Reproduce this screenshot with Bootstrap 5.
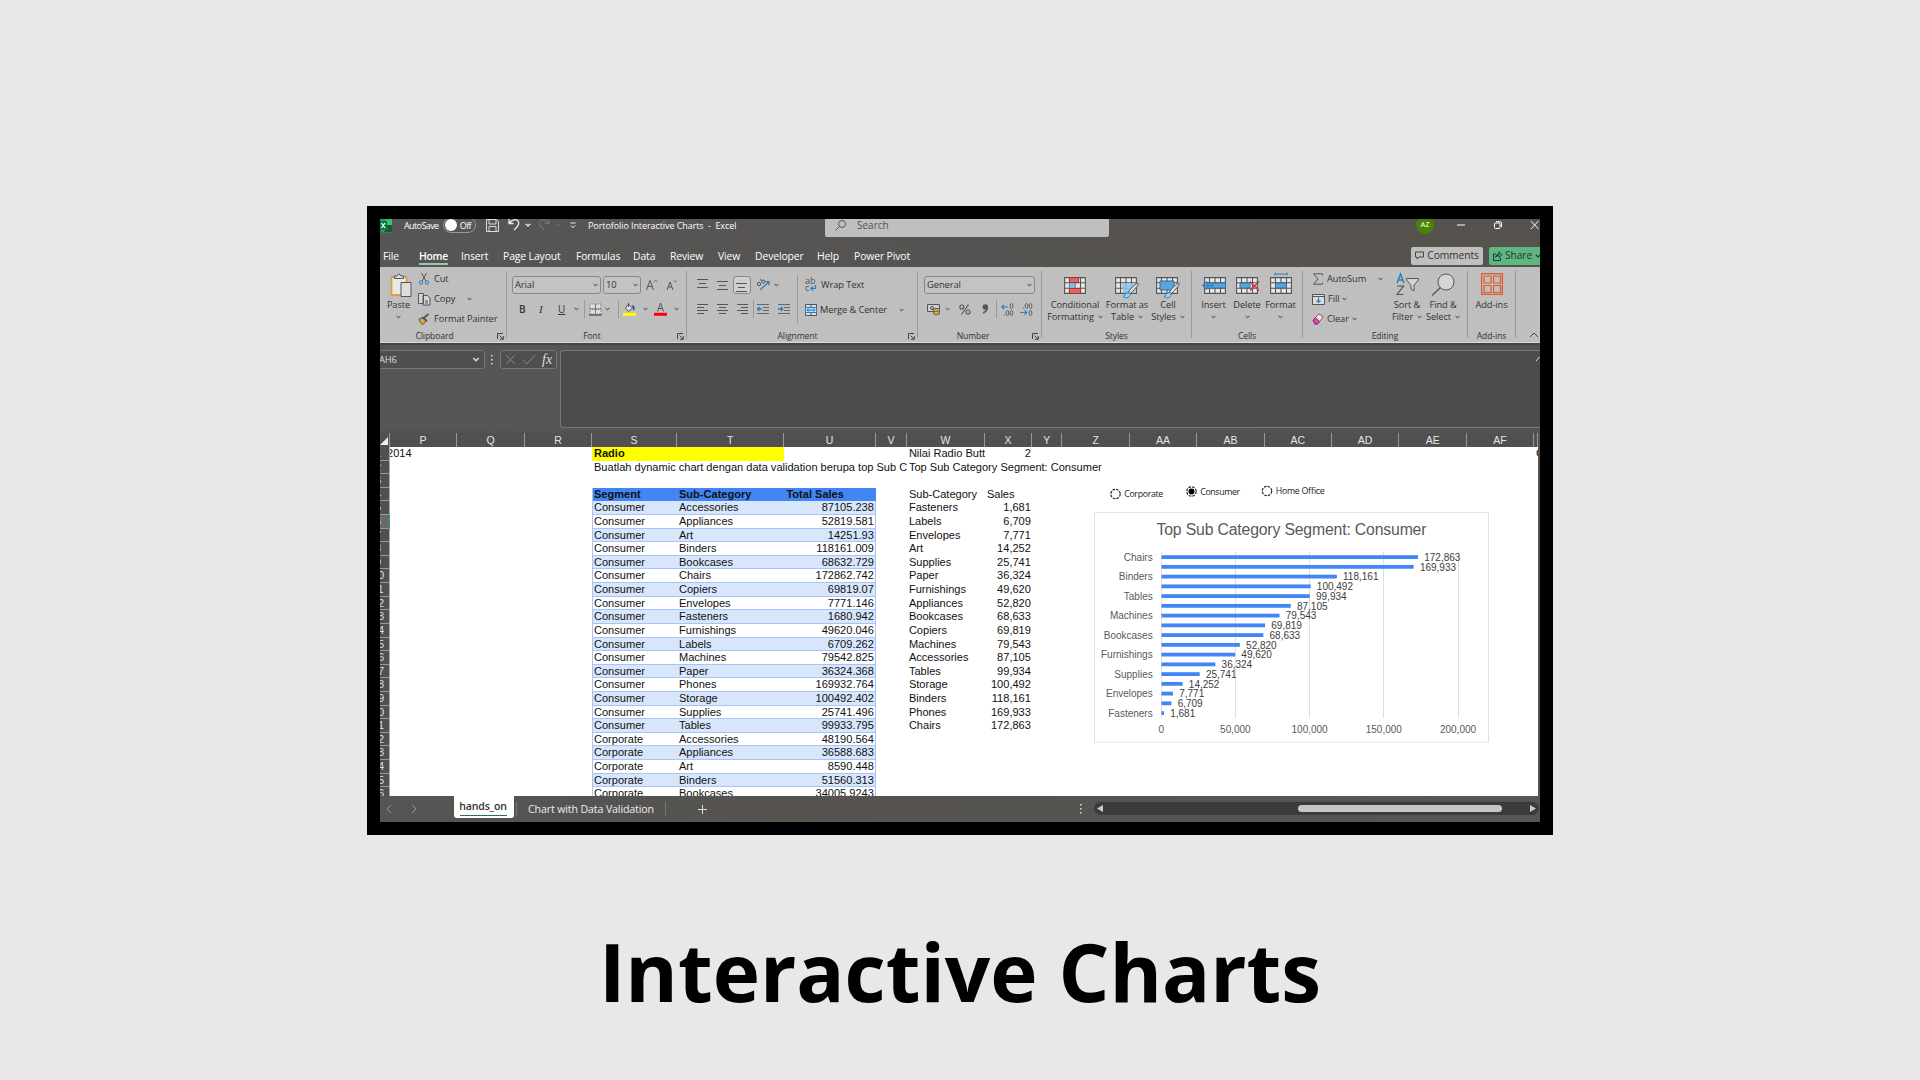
<!DOCTYPE html>
<html lang="en">
<head>
<meta charset="utf-8">
<title>Interactive Charts</title>
<link rel="stylesheet" href="https://cdn.jsdelivr.net/npm/bootstrap@5.3.0/dist/css/bootstrap.min.css">
<style>
body{width:1920px;height:1080px;overflow:hidden;background:#e9e8e6;font-family:"Open Sans","Noto Sans",sans-serif}
.frame{width:1186px;height:629px;margin:206px auto 0;border:13px solid #000;background:#000}
.screen{height:603px;overflow:hidden;position:relative;background:linear-gradient(90deg,#565656,#565452 50%,#56524d);white-space:nowrap;line-height:1;font-size:9.3px;letter-spacing:-.1px;color:#333}
svg{display:block;overflow:visible;flex:none}
.gr{display:grid;align-items:center}
.titlebar{height:26px;margin-top:-7px;color:#fff;font-size:9px;letter-spacing:-.08px;grid-template-columns:24px 39px 43px 22px 17px 13px 17px 15px 18px 237px 591px 41px 37px 36px auto}
.autosave{letter-spacing:-.6px}
.toggle{width:33px;height:16px;border:1px solid #999;border-radius:9px;padding:0 4px 0 1px}
.knob{width:12px;height:12px;border-radius:50%;background:#fff}
.searchbox{width:284px;height:24px;background:#bfbfbf;border-radius:0 0 2px 2px;color:#555;font-size:10px;padding-left:10px;gap:11px;letter-spacing:0}
.avatar{width:18px;height:18px;border-radius:50%;background:#498205;font-size:7.5px;color:#fff}
.tabs{height:29px;padding:7px 0 0 3px;color:#fff;font-size:10.4px;letter-spacing:-.12px;grid-template-columns:36px 42px 42px 73px 57px 37px 48px 37px 62px 37px 557px 78px auto}
.home{font-weight:600;width:29px;position:relative;letter-spacing:-.3px}
.home::after{content:"";position:absolute;left:0;right:0;bottom:-4px;height:2px;background:#8fd0a8}
.pill{height:18px;width:72px;background:#bfbfbf;border-radius:2px;color:#333;gap:3px;font-size:10.3px;margin-top:-1px}
.share{width:60px;background:#5cb87e;padding-left:4px}
.ribbon{height:76px;background:#bfbfbf;border-bottom:1px solid #dadada}
.rsep{width:1px;background:#999;margin:4px 0 4px}
.grp{display:flex;flex-direction:column}
.grp-label{height:13px;margin-top:auto;font-size:8.6px;display:flex;align-items:center;position:relative;top:.5px}
.grp-label span{flex:1;text-align:center}
.launch{margin-right:2px}
.l1{height:22px;margin-top:7px}.l2{height:22px;margin-top:2px}
.stack{margin-top:2px}.stack>div{height:20px}
.sel{border:1px solid #888;border-radius:3px;height:18px;padding:0 2px 0 2px;font-size:9.4px;background:#c3c3c3}
.tall{height:48px;margin-top:8px;border-right:1px solid #999}
.big{text-align:center;margin-top:6px;display:flex;flex-direction:column;align-items:center;line-height:12px}
.big .pic{height:26px;display:flex;align-items:flex-start}
.ln{display:flex;align-items:center;gap:4px}
.bar-sep{width:1px;height:18px;background:#999}
.fbar{height:87px;padding-top:5px;border-top:2px solid #454545;color:#ddd;grid-template-columns:120px 60px auto;align-items:start}
.box{border:1px solid #777;border-radius:3px;height:19px;background:#4f4f4f}
.sheet{font-family:"Liberation Sans",Arial,sans-serif;font-size:11.05px;letter-spacing:0;color:#111;background:#fff;height:349px;width:1158px;overflow:hidden;position:relative}
.cols{display:grid;grid-template-columns:10px 67px 68px 67px 85px 107.4px 91.5px 31px 78px 47px 30.5px 67.5px 67px 68px 67px 67.5px 67.5px 67px 4.5px}
.heads{height:17px;padding-top:3px;background:#545351;color:#e6e6e6;font-family:"Liberation Sans",Arial,sans-serif;font-size:10.5px;letter-spacing:0;text-align:center}
.heads div{border-right:1px solid #999;height:14px;line-height:15px;background:#505050}
.line{height:13.62px;line-height:13px}
.line>div{overflow:hidden;height:13.62px;padding:0 1px 0 2px}
.rn{background:#505050;color:#ddd;border-bottom:1px solid #999;border-right:1px solid #aaa;padding:0!important;display:flex;justify-content:center;margin-left:-13px;width:23px}
.rn.current{background:#6a6a6a;border-right-color:#2f9e60}
.yellow{background:#ff0}
.clipped{text-indent:-3px}
.tc{border-bottom:1px solid #a5c5fa}.odd{background:#d8e6fc}.hd{background:#4285f4;font-weight:bold}
.tl{border-left:1px solid #a5c5fa;padding-left:1px!important}.tr{border-right:1px solid #a5c5fa}
.over{position:absolute;left:0;top:0}
.tabbar{height:26px;background:linear-gradient(90deg,#555,#56534f 35%,#565656);color:#eee;font-size:10.6px;letter-spacing:-.12px;grid-template-columns:6px 25px 43px 62px 12px 137px 33px 382px 14px auto}
.active-tab{width:60px;height:22px;background:#fff;border-radius:0 0 3px 3px;color:#333;font-weight:600;letter-spacing:-.2px;align-self:start;display:flex;justify-content:center;align-items:center;padding:0 2px 2px 0;position:relative}
.active-tab::after{content:"";position:absolute;left:6px;right:7px;bottom:2px;height:1.5px;background:#1e7b45}
.track{width:445px;height:13px;background:#3b3b3b;border-radius:7px;padding:0 3px;display:grid;grid-template-columns:201px 204px 1fr auto;align-items:center;margin-top:-1px}
.thumb{height:7px;background:#c8c6c4;border-radius:4px}
.caption{font-size:80px;font-weight:700;color:#000;line-height:110px;margin-top:81px;text-align:center}
</style>
<script src="https://cdn.jsdelivr.net/npm/bootstrap@5.3.0/dist/js/bootstrap.bundle.min.js"></script>
</head>
<body>
<svg width="0" height="0" class="position-absolute">
<symbol id="ch" viewBox="0 0 6 4"><path d="M.8.8 3 3 5.2.8" fill="none" stroke="currentColor" stroke-width="1.2"/></symbol>
<symbol id="launch" viewBox="0 0 7 7"><path d="M.5 6V.5H6M2.5 2.5l3.5 3.5M6.3 3v3.3H3" fill="none" stroke="#444"/></symbol>
<symbol id="cells" viewBox="0 0 22 17"><path d="M.6.6h20.8v15.8H.6z" fill="#e6e6e6"/><path d="M.6.6h20.8v15.8H.6zM.6 5.8h20.8M.6 11.2h20.8M5.5.6v15.8M11 .6v15.8M16.5.6v15.8" fill="none" stroke="#555" stroke-width="1.1"/></symbol>
<symbol id="brush" viewBox="0 0 17 17"><path d="M15.5 1C12 3 8 7 6.5 10l1.800 1.800C11 9 15 5 16.500 2z" fill="#ddd" stroke="#555"/><path d="M6.500 10.500c-3-.5-3 3-5.500 4 3 2.500 7 1 7.200-2z" fill="#9ad0f5" stroke="#2a7fc0"/></symbol>
</svg>

<main class="frame">
<div class="screen">
  <div class="titlebar gr">
    <svg width="12" height="15" viewBox="0 0 12 15"><path d="M0 0h12v13.500q0 1-1 1H1z" fill="#21a366"/><path d="M6 7h6v7H4z" fill="#185c37"/><path d="M6 0h6v7H6z" fill="#33c481"/><path d="M0 3h7v9H0z" fill="#107c41"/><path d="M1.500 5l3.500 5M5 5l-3.500 5" stroke="#fff" stroke-width="1.200"/></svg>
    <span class="autosave">AutoSave</span>
    <div class="toggle d-flex align-items-center justify-content-between"><div class="knob"></div><span class="autosave">Off</span></div>
    <svg width="13" height="13" viewBox="0 0 13 13" fill="none" stroke="#ddd"><path d="M.5.5h10l2 2v10H.5zM3 .5v4.500h7V.5M3 12.500V7.500h7v5"/></svg>
    <svg width="12" height="12" viewBox="0 0 12 12" fill="none" stroke="#eee" stroke-width="1.300"><path d="M1 0v4.500h4.500M1 4.500C4 .5 8-.5 10 2s.5 5-4 9"/></svg>
    <svg width="6" height="4"><use href="#ch"/></svg>
    <svg width="12" height="12" viewBox="0 0 12 12" fill="none" stroke="#737373" stroke-width="1.200"><path d="M11 0v4.500H6.500M11 4.500C8 .5 4-.5 2 2s-.5 5 4 9"/></svg>
    <svg width="5" height="4" color="#777"><use href="#ch"/></svg>
    <svg width="6" height="7" viewBox="0 0 6 7" fill="none" stroke="#eee"><path d="M.5 1h5M.8 3.500 3 5.700 5.200 3.500"/></svg>
    <span>Portofolio Interactive Charts &nbsp;-&nbsp; Excel</span>
    <div class="searchbox d-flex align-items-center"><svg width="11" height="11" viewBox="0 0 11 11" fill="none" stroke="#555"><circle cx="7" cy="4" r="3.500"/><path d="M4.500 6.500.5 10.500"/></svg><span>Search</span></div>
    <div class="avatar d-flex align-items-center justify-content-center">AZ</div>
    <svg width="8" height="2"><path d="M0 1h8" stroke="#fff"/></svg>
    <svg width="8" height="8" viewBox="0 0 8 8" fill="none" stroke="#fff"><rect x=".5" y="2" width="5.500" height="5.500" rx="1"/><path d="M2 .7h4q1.500 0 1.500 1.500V6"/></svg>
    <svg width="9" height="8" viewBox="0 0 9 8"><path d="M.8 0l7.700 8M8.500 0 .8 8" stroke="#fff"/></svg>
  </div>

  <div class="tabs gr">
    <span>File</span><span class="home">Home</span><span>Insert</span><span>Page Layout</span><span>Formulas</span><span>Data</span><span>Review</span><span>View</span><span>Developer</span><span>Help</span><span>Power Pivot</span>
    <div class="pill d-flex align-items-center justify-content-center"><svg width="9" height="9" viewBox="0 0 9 9" fill="none" stroke="#444"><path d="M.5 1h8v5H4L2 8V6H.5z"/></svg>Comments</div>
    <div class="pill share d-flex align-items-center"><svg width="9" height="10" viewBox="0 0 9 10" fill="none" stroke="#234"><path d="M3 3H.5v6.500h7V7M2.500 6.500Q3 3 6 3V.8L8.700 4 6 6.500v-2Q4 4 2.500 6.500z"/></svg><span>Share</span><svg width="6" height="4"><use href="#ch"/></svg></div>
  </div>

  <div class="ribbon d-flex">
    <div class="grp" style="width:126px">
      <div class="d-flex">
        <div class="big" style="width:37px"><div class="pic"><svg width="22" height="25" viewBox="0 0 22 25" class="ms-1"><path d="M1.500 4h15v18h-15z" fill="#e8e8e8" stroke="#d9a040" stroke-width="1.800"/><path d="M4.500 5.500V3h2.500q2-4 4 0h2.500v2.500z" fill="#ddd" stroke="#555"/><path d="M11 9.500h10v14H11z" fill="#ddd" stroke="#555"/></svg></div><span>Paste</span><svg width="5" height="4" class="mt-1"><use href="#ch"/></svg></div>
        <div class="stack ms-auto" style="width:88px">
          <div class="ln"><svg width="12" height="12" viewBox="0 0 12 12" fill="none" stroke="#555"><path d="M3.500 0 8 8M8.500 0 4 8"/><g stroke="#2a7fc0"><circle cx="3" cy="9.500" r="1.700"/><circle cx="9" cy="9.500" r="1.700"/></g></svg>Cut</div>
          <div class="ln"><svg width="12" height="12" viewBox="0 0 12 12" fill="#d5d5d5" stroke="#555"><path d="M.5.5h5v10h-5zM5 2.500h4.500l2.500 2.500v7H5zM7 8h3M7 10h3"/></svg>Copy<svg width="5" height="4" style="margin-left:8px"><use href="#ch"/></svg></div>
          <div class="ln"><svg width="12" height="12" viewBox="0 0 12 12"><path d="M1 6l4-1 3 3-3 3.500q-3-1-4-5.500z" fill="#e2a93b" stroke="#555"/><path d="M4 4l5 4M6 5 10.500.8" stroke="#555" stroke-width="1.800"/></svg><span class="tight">Format Painter</span></div>
        </div>
      </div>
      <div class="grp-label"><span class="pe-2">Clipboard</span><svg class="launch" width="7" height="7"><use href="#launch"/></svg></div>
    </div><div class="rsep"></div>

    <div class="grp" style="width:179px">
      <div class="l1 d-flex align-items-center" style="padding-left:5px;gap:2px"><div class="sel d-flex align-items-center justify-content-between" style="width:89px">Arial<svg width="5" height="4"><use href="#ch"/></svg></div><div class="sel d-flex align-items-center justify-content-between" style="width:38px">10<svg width="5" height="4"><use href="#ch"/></svg></div>
      <svg width="12" height="12" viewBox="0 0 12 12" fill="none" stroke="#555" style="margin-left:3px"><path d="M.5 11 4 1.500 7.500 11M2 7.500h4"/><path d="M8 3 9.700 1.200 11.500 3" stroke="#2a7fc0"/></svg>
      <svg width="12" height="12" viewBox="0 0 12 12" fill="none" stroke="#555" style="margin-left:6px"><path d="M1 11 4 3l3 8M2 8h4"/><path d="M7.500 1.500 9.200 3.200 11 1.500" stroke="#2a7fc0"/></svg></div>
      <div class="l2 gr" style="padding-left:12px;grid-template-columns:20px 19px 16px 10px 5px 16px 13px 5px 16px 15px 16px auto;font-size:10px">
        <span class="fw-semibold">B</span><i style="font-family:'Liberation Serif',serif;font-size:11px">I</i><u>U</u><svg width="5" height="4"><use href="#ch"/></svg><div class="bar-sep"></div>
        <svg width="13" height="13" viewBox="0 0 13 13"><path d="M1 1h11v10H1z" fill="#ddd"/><path d="M1 1h11v10H1zM6.500 1v10M1 6h11" fill="none" stroke="#777" stroke-dasharray="1 1"/><path d="M1 6h11M6.500 1v10" stroke="#777"/><path d="M0 12h13" stroke="#333"/></svg><svg width="5" height="4"><use href="#ch"/></svg><div class="bar-sep"></div>
        <svg width="13" height="13" viewBox="0 0 13 13"><path d="M5.500 1l4 4-4 3.500-3-3.500zM5.500 0v4" fill="#ddd" stroke="#555"/><path d="M9.500 2.500q2 2 1 4.500" stroke="#1a4d8a" stroke-width="1.500" fill="none"/><path d="M0 9.800h13v3H0z" fill="#ff0"/></svg><svg width="5" height="4" class="ms-1"><use href="#ch"/></svg>
        <svg width="13" height="13" viewBox="0 0 13 13"><path d="M3.500 8.500 6.500 0l3 8.500M4.500 5.500h4" fill="none" stroke="#555"/><path d="M0 9.800h13v3H0z" fill="#f00"/></svg><svg width="5" height="4" class="ms-1"><use href="#ch"/></svg>
      </div>
      <div class="grp-label"><span>Font</span><svg class="launch" width="7" height="7"><use href="#launch"/></svg></div>
    </div><div class="rsep"></div>

    <div class="grp" style="width:230px">
      <div class="d-flex">
        <div class="tall" style="width:111px;padding-left:10px">
          <div class="gr" style="height:20px;grid-template-columns:20px 16px 24px 17px auto">
            <svg width="11" height="12" stroke="#555"><path d="M0 .5h11M2 4.500h7M0 8.500h11"/></svg><svg width="11" height="8" stroke="#555"><path d="M0 .5h11M2 4.500h7M0 8.500h11"/></svg>
            <div style="width:18px;height:18px;border:1px solid #888;border-radius:3px;background:#cfcfcf;padding:6px 2px"><svg width="12" height="9" stroke="#555"><path d="M0 .5h11M2 4.500h7M0 8.500h11"/></svg></div>
            <svg width="13" height="12" viewBox="0 0 13 12" fill="none"><path d="M3 11 11.500 3M8 2.500h4v4" stroke="#2a7fc0" stroke-width="1.200"/><circle cx="2" cy="5" r="1.700" stroke="#555"/><path d="M3 0l3.500 4.500q2.500-2 .5-3.500-1.500-.5-2 1" stroke="#555"/></svg><svg width="5" height="4"><use href="#ch"/></svg>
          </div>
          <div class="gr" style="height:22px;margin-top:3px;grid-template-columns:20px 20px 16px 4px 21px auto">
            <svg width="11" height="11" stroke="#555"><path d="M0 .5h11M0 3.500h7M0 6.500h11M0 9.500h7"/></svg><svg width="11" height="11" stroke="#555"><path d="M0 .5h11M2 3.500h7M0 6.500h11M2 9.500h7"/></svg><svg width="11" height="11" stroke="#555"><path d="M0 .5h11M4 3.500h7M0 6.500h11M4 9.500h7"/></svg><div class="bar-sep"></div>
            <svg width="12" height="11" fill="none" stroke="#666"><path d="M0 .5h12M6 3.500h6M6 6.500h6M0 9.500h12"/><path d="M5 5H.8M2.500 3 .5 5l2 2" stroke="#2a7fc0" stroke-width="1.300"/></svg>
            <svg width="12" height="11" fill="none" stroke="#666"><path d="M0 .5h12M6 3.500h6M6 6.500h6M0 9.500h12"/><path d="M0 5h4.500M2.800 3l2 2-2 2" stroke="#2a7fc0" stroke-width="1.300"/></svg>
          </div>
        </div>
        <div style="padding-left:7px">
          <div class="l1 ln" style="gap:3px"><div style="width:13px;height:14px;font-size:9px;position:relative;color:#555"><span class="d-block" style="line-height:6px">ab</span><span class="d-block" style="line-height:7px">c</span><svg width="7" height="6" class="over" style="left:5px;top:7px" fill="none" stroke="#2a7fc0" stroke-width="1.200"><path d="M5.500 0v3.500H1M3 1.500l-2 2 2 2"/></svg></div>Wrap Text</div>
          <div class="l2 ln" style="gap:3px;margin-top:3px"><svg width="12" height="12" viewBox="0 0 12 12" fill="none"><path d="M.5.500h11v11H.5zM6 .5v11" fill="#ddd" stroke="#555"/><path d="M.5 3.500h11v5H.5z" fill="#bfe0f7" stroke="#2a7fc0"/><path d="M2 6h8M3.500 4.700 2 6l1.500 1.300M8.500 4.700 10 6 8.500 7.300" stroke="#1a6bb0"/></svg>Merge &amp; Center<svg width="5" height="4" style="margin-left:9px"><use href="#ch"/></svg></div>
        </div>
      </div>
      <div class="grp-label"><span>Alignment</span><svg class="launch" width="7" height="7"><use href="#launch"/></svg></div>
    </div><div class="rsep"></div>

    <div class="grp" style="width:123px">
      <div class="l1 d-flex align-items-center" style="padding-left:6px"><div class="sel d-flex align-items-center justify-content-between" style="width:111px">General<svg width="5" height="4"><use href="#ch"/></svg></div></div>
      <div class="l2 gr" style="padding-left:9px;grid-template-columns:18px 14px 23px 14px 5px 19px auto;color:#555">
        <svg width="13" height="11" viewBox="0 0 13 11"><path d="M.5.5h12v7H.5z" fill="#ccc" stroke="#555"/><circle cx="5" cy="4" r="1.500" fill="none" stroke="#555"/><path d="M6.500 4.500h6v5.500q-3 1.500-6 0z" fill="#d9a83c" stroke="#665"/><path d="M6.500 7q3 1 6 0" stroke="#665" fill="none"/></svg><svg width="5" height="4"><use href="#ch"/></svg>
        <svg width="12" height="11" viewBox="0 0 12 11" fill="none" stroke="#555" stroke-width="1.100"><circle cx="2.800" cy="3" r="2"/><circle cx="9" cy="8" r="2"/><path d="M9.500.5l-7 10"/></svg>
        <svg width="7" height="10" viewBox="0 0 7 10"><circle cx="3.300" cy="3" r="2.700" fill="#555"/><path d="M5.500 3Q5.500 7 1 9" stroke="#555" stroke-width="1.400" fill="none"/></svg><div class="bar-sep"></div>
        <svg width="13" height="13" viewBox="0 0 13 13" fill="none" stroke="#555" stroke-width=".9"><ellipse cx="10.500" cy="3" rx="1.400" ry="2.500"/><ellipse cx="6.500" cy="10" rx="1.400" ry="2.500"/><ellipse cx="10.500" cy="10" rx="1.400" ry="2.500"/><path d="M3 12h1"/><path d="M7 4H.8M3 1.800.8 4 3 6.200" stroke="#2a7fc0" stroke-width="1.200"/></svg>
        <svg width="13" height="13" viewBox="0 0 13 13" fill="none" stroke="#555" stroke-width=".9"><ellipse cx="6.500" cy="3" rx="1.400" ry="2.500"/><ellipse cx="10.500" cy="3" rx="1.400" ry="2.500"/><ellipse cx="10.500" cy="10" rx="1.400" ry="2.500"/><path d="M3 5h1"/><path d="M0 9.500h6.500M4.500 7.300l2.200 2.200-2.200 2.200" stroke="#2a7fc0" stroke-width="1.200"/></svg>
      </div>
      <div class="grp-label"><span class="pe-1">Number</span><svg class="launch" width="7" height="7"><use href="#launch"/></svg></div>
    </div><div class="rsep"></div>

    <div class="grp" style="width:149px">
      <div class="d-flex">
        <div class="big" style="width:66px"><div class="pic pt-1"><svg width="22" height="17" viewBox="0 0 22 17"><use href="#cells"/><path d="M5.500.6h9v5h-9zM5.500 11.500h11v5h-11z" fill="#e06666" stroke="#a33"/><path d="M5.500 6h5v5h-5z" fill="#7db8e8"/></svg></div><span>Conditional</span><span class="ln">Formatting<svg width="5" height="4"><use href="#ch"/></svg></span></div>
        <div class="big" style="width:38px"><div class="pic pt-1"><svg width="24" height="22" viewBox="0 0 24 22"><use href="#cells" width="22" height="17"/><path d="M6.500 6h14v10H8z" fill="#8cc4f0" opacity=".8"/><use href="#brush" x="7" y="5" width="17" height="17"/></svg></div><span>Format as</span><span class="ln">Table<svg width="5" height="4"><use href="#ch"/></svg></span></div>
        <div class="big" style="width:44px"><div class="pic pt-1"><svg width="24" height="22" viewBox="0 0 24 22"><use href="#cells" width="22" height="17"/><path d="M4 4h14v9H4z" fill="#5aa5dc" stroke="#2a6fa8"/><use href="#brush" x="7" y="5" width="17" height="17"/></svg></div><span>Cell</span><span class="ln">Styles<svg width="5" height="4"><use href="#ch"/></svg></span></div>
      </div>
      <div class="grp-label"><span>Styles</span></div>
    </div><div class="rsep"></div>

    <div class="grp" style="width:110px">
      <div class="d-flex" style="padding-left:5px">
        <div class="big" style="width:33px"><div class="pic pt-1"><svg width="24" height="17" viewBox="0 0 24 17"><use href="#cells" x="2" width="22" height="17"/><path d="M5 6h18.500v5H5z" fill="#5aa5dc" stroke="#2a6fa8"/><path d="M12 8.500H1M5 4.500 1 8.500l4 4" fill="none" stroke="#2a7fc0" stroke-width="1.400"/></svg></div><span>Insert</span><svg width="5" height="4" class="mt-1"><use href="#ch"/></svg></div>
        <div class="big" style="width:34px"><div class="pic pt-1"><svg width="23" height="17" viewBox="0 0 23 17"><use href="#cells" width="22" height="17"/><path d="M4 6h10v5H4z" fill="#5aa5dc" stroke="#2a6fa8"/><path d="M14 4.500l9 9M23 4.500l-9 9" stroke="#d13438" stroke-width="1.400"/></svg></div><span>Delete</span><svg width="5" height="4" class="mt-1"><use href="#ch"/></svg></div>
        <div class="big" style="width:33px"><div class="pic pt-1"><svg width="22" height="17" viewBox="0 0 22 17"><use href="#cells"/><path d="M5.500 6h11v5h-11z" fill="#5aa5dc" stroke="#2a6fa8"/><path d="M5-3h12M5-4.500v3M17-4.500v3" stroke="#2a7fc0"/></svg></div><span>Format</span><svg width="5" height="4" class="mt-1"><use href="#ch"/></svg></div>
      </div>
      <div class="grp-label"><span>Cells</span></div>
    </div><div class="rsep"></div>

    <div class="grp" style="width:164px">
      <div class="d-flex">
        <div class="stack" style="width:86px;padding-left:9px">
          <div class="ln" style="gap:3px"><svg width="12" height="12" viewBox="0 0 12 12" fill="none" stroke="#555"><path d="M10.500 2.500V.8H1.500L6 6l-4.500 5.200h9V9.500"/></svg>AutoSum<svg width="5" height="4" style="margin-left:9px"><use href="#ch"/></svg></div>
          <div class="ln" style="gap:3px"><svg width="13" height="11" viewBox="0 0 13 11" fill="none"><path d="M.5.5h12v10H.5zM.5 2.500h12" fill="#ddd" stroke="#555"/><path d="M6.500 3.500v5M4.500 6.500l2 2 2-2" stroke="#2a7fc0" stroke-width="1.200"/></svg>Fill<svg width="5" height="4"><use href="#ch"/></svg></div>
          <div class="ln" style="gap:3px"><svg width="12" height="12" viewBox="0 0 12 12"><path d="M1 7 7 .8 11.300 4 5.500 11H3z" fill="#e6e6e6" stroke="#a33a7a"/><path d="M1 7l2.500-2.500 4 4L5.500 11H3z" fill="#d94fa5" stroke="#8a2a66"/></svg>Clear<svg width="5" height="4"><use href="#ch"/></svg></div>
        </div>
        <div class="big" style="width:36px"><div class="pic"><svg width="23" height="23" viewBox="0 0 23 23" fill="none"><path d="M1 10 4.500 1 8 10M2.200 7h4.600" stroke="#2a7fc0" stroke-width="1.400"/><path d="M1 13h6.500L1 21.500h6.500" stroke="#555" stroke-width="1.200"/><path d="M10.500 5.500h12v1.500L18 12v6l-3-2v-4l-4.500-5z" stroke="#555" fill="#d5d5d5"/></svg></div><span>Sort &amp;</span><span class="ln">Filter<svg width="5" height="4"><use href="#ch"/></svg></span></div>
        <div class="big" style="width:36px"><div class="pic"><svg width="24" height="23" viewBox="0 0 24 23"><circle cx="15" cy="9" r="8" fill="#d5d5d5" stroke="#555"/><path d="M9.500 14.500 1 22.500" stroke="#555" stroke-width="1.300"/></svg></div><span>Find &amp;</span><span class="ln">Select<svg width="5" height="4"><use href="#ch"/></svg></span></div>
      </div>
      <div class="grp-label"><span>Editing</span></div>
    </div><div class="rsep"></div>

    <div class="grp" style="width:47px">
      <div class="big"><div class="pic"><svg width="22" height="22" viewBox="0 0 22 22" fill="none" stroke="#e0592a" stroke-width="1.200"><path d="M.6.6h20.800v20.800H.6zM3 3h7v7H3zM12.500 3h7v7h-7zM3 12.500h7v7H3zM12.500 12.500h7v7h-7z"/></svg></div><span>Add-ins</span></div>
      <div class="grp-label"><span>Add-ins</span></div>
    </div><div class="rsep"></div>
    <svg class="mt-auto ms-auto mb-1" width="10" height="6" style="margin-right:1px" fill="none" stroke="#444"><path d="M1 5l4-4 4 4"/></svg>
  </div>

  <div class="fbar gr">
    <div class="box d-flex align-items-center justify-content-between" style="width:107px;margin-left:-2px;padding-right:4px;padding-left:0"><span>AH6</span><svg width="8" height="5" viewBox="0 0 6 4"><use href="#ch"/></svg></div>
    <div class="box d-flex align-items-center justify-content-between position-relative" style="width:57px;padding:0 4px 0 5px"><svg class="position-absolute" style="left:-10px" width="2" height="10" fill="#ddd"><path d="M0 0h1.500v1.500H0zM0 4h1.500v1.500H0zM0 8h1.500v1.500H0z"/></svg><svg width="9" height="9"><path d="M0 0l9 9M9 0 0 9" stroke="#888"/></svg><svg width="12" height="9" fill="none" stroke="#888"><path d="M0 5l4 4L12 0"/></svg><i style="font-family:'Liberation Serif',serif;font-size:14px">fx</i></div>
    <div class="box position-relative" style="height:78px;background:#4c4c4c;border-right:0;border-radius:3px 0 0 3px"><svg class="position-absolute" style="right:-3px;top:6px" width="7" height="4" fill="none" stroke="#ddd"><path d="M0 4l3.500-4L7 4"/></svg></div>
  </div>

  <div class="cols heads" id="heads"></div>
  <div class="sheet">
    <div id="rows"></div>
    <svg class="over" id="chart" width="1158" height="349" viewBox="380 447 1158 349"></svg>
  </div>
  <div class="tabbar gr">
    <span></span><svg width="5" height="8" fill="none" stroke="#999"><path d="M5 0 1 4l4 4"/></svg><svg width="5" height="8" fill="none" stroke="#999" style="margin-left:1px"><path d="M0 0l4 4-4 4"/></svg>
    <div class="active-tab">hands_on</div><div class="bar-sep" style="height:14px;background:#777"></div><span>Chart with Data Validation</span><div class="bar-sep" style="height:14px;background:#777"></div>
    <svg width="9" height="9" stroke="#ddd"><path d="M4.500 0v9M0 4.500h9"/></svg><svg width="2" height="10" fill="#ddd"><path d="M0 0h1.500v1.500H0zM0 4h1.500v1.500H0zM0 8h1.500v1.500H0z"/></svg>
    <div class="track"><svg width="6" height="7" fill="#ccc"><path d="M6 0v7L0 3.500z"/></svg><div class="thumb"></div><span></span><svg width="6" height="7" fill="#ccc"><path d="M0 0v7l6-3.500z"/></svg></div>
  </div>
</div>
</main>
<h1 class="caption mb-0">Interactive Charts</h1>

<script>
const heads = ['', 'P','Q','R','S','T','U','V','W','X','Y','Z','AA','AB','AC','AD','AE','AF',''];
document.getElementById('heads').innerHTML = heads.map((h, i) => i ? `<div>${h}</div>` :
  '<div><svg width="9" height="13"><path d="M8 4v8H0z" fill="#eee"/></svg></div>').join('');
const table = [['Consumer','Accessories','87105.238'],['Consumer','Appliances','52819.581'],['Consumer','Art','14251.93'],['Consumer','Binders','118161.009'],['Consumer','Bookcases','68632.729'],['Consumer','Chairs','172862.742'],['Consumer','Copiers','69819.07'],['Consumer','Envelopes','7771.146'],['Consumer','Fasteners','1680.942'],['Consumer','Furnishings','49620.046'],['Consumer','Labels','6709.262'],['Consumer','Machines','79542.825'],['Consumer','Paper','36324.368'],['Consumer','Phones','169932.764'],['Consumer','Storage','100492.402'],['Consumer','Supplies','25741.496'],['Consumer','Tables','99933.795'],['Corporate','Accessories','48190.564'],['Corporate','Appliances','36588.683'],['Corporate','Art','8590.448'],['Corporate','Binders','51560.313'],['Corporate','Bookcases','34005.9243']];
const ranked = [['Fasteners',1681],['Labels',6709],['Envelopes',7771],['Art',14252],['Supplies',25741],['Paper',36324],['Furnishings',49620],['Appliances',52820],['Bookcases',68633],['Copiers',69819],['Machines',79543],['Accessories',87105],['Tables',99934],['Storage',100492],['Binders',118161],['Phones',169933],['Chairs',172863]];
const fmt = n => n.toLocaleString('en-US');
const cell = (col, text, cls = '', span = 1) => `<div class="${cls}" style="grid-area:1/${col}/2/${col + span}">${text}</div>`;
let out = '';
for (let n = 1; n <= 26; n++) {
  let c = `<div class="rn${n === 6 ? ' current' : ''}" style="grid-area:1/1/2/2">${n}</div>`;
  if (n === 1) c += cell(2, '2014', 'px-0 clipped') + cell(5, '<b>Radio</b>', 'yellow', 2) + cell(9, 'Nilai Radio Butt') + cell(10, '2', 'text-end') + cell(19, 'C');
  if (n === 2) c += cell(5, 'Buatlah dynamic chart dengan data validation berupa top Sub C', '', 4) + cell(9, 'Top Sub Category Segment: Consumer', '', 5);
  if (n === 4) c += cell(5, 'Segment', 'hd tl') + cell(6, 'Sub-Category', 'hd') + cell(7, 'Total Sales', 'hd') + cell(9, 'Sub-Category') + cell(10, 'Sales');
  if (n > 4) {
    const t = table[n - 5], k = n % 2 ? ' odd' : '';
    c += cell(5, t[0], 'tc tl' + k) + cell(6, t[1], 'tc' + k) + cell(7, t[2], 'tc tr text-end' + k);
    const r = ranked[n - 5];
    if (r) c += cell(9, r[0]) + cell(10, fmt(r[1]), 'text-end');
  }
  out += `<div class="cols line">${c}</div>`;
}
document.getElementById('rows').innerHTML = out;

/* option buttons and bar chart floating over the sheet */
let g = '<g font-family="Open Sans" font-size="8.800" fill="#222">';
[[1115.5, 494, 'Corporate', 39], [1191.5, 491.5, 'Consumer', 40], [1267, 491, 'Home Office', 49]].forEach(([x, y, t, w], i) => {
  g += `<circle cx="${x}" cy="${y}" r="4.700" fill="#fff" stroke="#222" stroke-width="1.200" stroke-dasharray="2.600 1.100"/>`;
  if (i === 1) g += `<circle cx="${x}" cy="${y}" r="3" fill="#000"/>`;
  g += `<text x="${x + 8.7}" y="${y + 3.3}" textLength="${w}">${t}</text>`;
});
g += '</g><g font-family="Liberation Sans" font-size="10" fill="#595959"><rect x="1094.500" y="512.500" width="394" height="229.500" fill="#fff" stroke="#e2e2e2"/>';
g += '<text x="1156.500" y="535" font-size="15.800" textLength="270">Top Sub Category Segment: Consumer</text>';
for (let i = 0; i < 5; i++) {
  const x = 1161.2 + i * 74.2;
  g += `<path d="M${Math.floor(x) + .5} 552v166" stroke="#e0e0e0"/><text x="${x}" y="732.500" text-anchor="middle">${fmt(i * 50000)}</text>`;
}
[...ranked].reverse().forEach(([name, v], i) => {
  const y = 557.1 + i * 9.75, w = v / 200000 * 296.8;
  g += `<rect x="1161.500" y="${y - 1.9}" width="${w}" height="3.800" fill="#4285f4"/>`;
  g += `<text x="${1161.2 + w + 6.5}" y="${y + 3.8}" fill="#404040">${fmt(v)}</text>`;
  if (i % 2 === 0) g += `<text x="1152.700" y="${y + 3.4}" text-anchor="end">${name}</text>`;
});
document.getElementById('chart').innerHTML = g + '</g>';
</script>
</body>
</html>
